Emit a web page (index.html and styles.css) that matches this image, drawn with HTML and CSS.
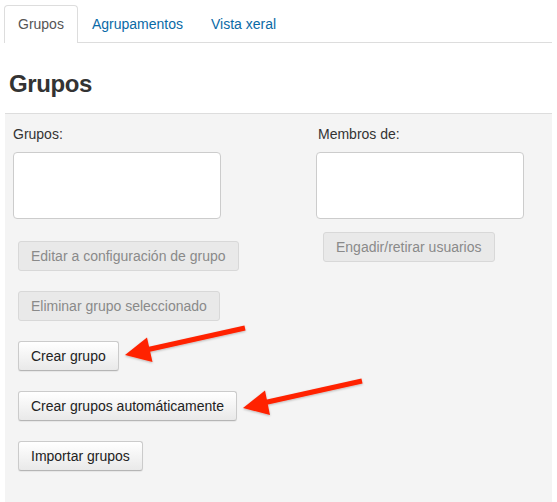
FILE: index.html
```html
<!DOCTYPE html>
<html lang="gl">
<head>
<meta charset="utf-8">
<title>Grupos</title>
<link rel="stylesheet" href="styles.css">
</head>
<body>
<div class="page">
  <ul class="tabs">
    <li class="tab active">Grupos</li>
    <li class="tab"><a href="#">Agrupamentos</a></li>
    <li class="tab"><a href="#">Vista xeral</a></li>
  </ul>
  <h2 class="title">Grupos</h2>
  <div class="panel">
    <div class="col col-left">
      <label class="label">Grupos:</label>
      <div class="listbox"></div>
      <div class="actions">
        <button class="btn" disabled>Editar a configuración de grupo</button>
        <button class="btn" disabled>Eliminar grupo seleccionado</button>
        <button class="btn">Crear grupo</button>
        <button class="btn">Crear grupos automáticamente</button>
        <button class="btn">Importar grupos</button>
      </div>
    </div>
    <div class="col col-right">
      <label class="label label-right">Membros de:</label>
      <div class="listbox"></div>
      <div class="actions actions-right">
        <button class="btn" disabled>Engadir/retirar usuarios</button>
      </div>
    </div>
  </div>
</div>
<svg class="arrows" width="557" height="502" viewBox="0 0 557 502" aria-hidden="true">
  <defs>
    <filter id="sh" x="-20%" y="-50%" width="140%" height="200%">
      <feDropShadow dx="0" dy="1" stdDeviation="1" flood-color="#000" flood-opacity="0.25"/>
    </filter>
  </defs>
  <g filter="url(#sh)" fill="#ff2200" stroke="#ff2200">
    <line x1="245" y1="328" x2="146" y2="350" stroke-width="5"/>
    <polygon points="125,355 147,337.5 152.5,362" stroke="none"/>
    <line x1="362" y1="381" x2="263" y2="403" stroke-width="5"/>
    <polygon points="243,408 265,390.5 270,415" stroke="none"/>
  </g>
</svg>
</body>
</html>
```

FILE: styles.css
```css
html, body {
  margin: 0;
  padding: 0;
  height: 502px;
  overflow: hidden;
  background: #fff;
}

body {
  font-family: "Liberation Sans", Arial, Helvetica, sans-serif;
  font-size: 14px;
  color: #333;
  position: relative;
}

.page {
  display: flex;
  flex-direction: column;
  height: 502px;
  padding-top: 5px;
  box-sizing: border-box;
}

.tabs {
  list-style: none;
  margin: 0 5px 0 4px;
  padding: 0;
  display: flex;
  border-bottom: 1px solid #ddd;
}

.tab {
  padding: 8px 13px;
  line-height: 20px;
  border: 1px solid transparent;
  border-bottom: none;
  border-radius: 4px 4px 0 0;
}

.tab a {
  color: #0a6aa6;
  text-decoration: none;
}

.tab.active {
  color: #555;
  background: #fff;
  border-color: #ddd;
  margin-bottom: -1px;
  padding-bottom: 9px;
}

.title {
  margin: 28px 0 16px 9px;
  font-size: 24px;
  line-height: 26px;
  font-weight: bold;
  letter-spacing: -0.4px;
  color: #333;
}

.panel {
  flex: 1;
  margin: 0 5px;
  background: #f4f4f4;
  border-top: 1px solid #ddd;
  padding: 10px 0 0 8px;
  display: grid;
  grid-template-columns: 303px 1fr;
  align-items: start;
}

.col {
  display: flex;
  flex-direction: column;
  align-items: flex-start;
}

.label {
  line-height: 20px;
  color: #333;
}

.label-right {
  padding-left: 2px;
}

.listbox {
  margin-top: 8px;
  width: 208px;
  height: 67px;
  box-sizing: border-box;
  background: #fff;
  border: 1px solid #ccc;
  border-radius: 4px;
}

.actions {
  display: flex;
  flex-direction: column;
  align-items: flex-start;
  gap: 20px;
  margin: 22px 0 0 5px;
}

.actions-right {
  margin: 13px 0 0 7px;
}

.btn {
  font-family: "Liberation Sans", Arial, Helvetica, sans-serif;
  font-size: 14px;
  height: 30px;
  line-height: 27px;
  padding: 1px 12px 0;
  box-sizing: border-box;
  color: #222;
  background: linear-gradient(#ffffff, #e9e9e9);
  border: 1px solid #cbcbcb;
  border-bottom-color: #b5b5b5;
  border-radius: 3px;
  box-shadow: 0 1px 1px rgba(0, 0, 0, 0.06);
  white-space: nowrap;
}

.btn:disabled {
  color: #8a8a8a;
  background: #e9e9e9;
  border-color: #d8d8d8;
  box-shadow: none;
}

.arrows {
  position: absolute;
  left: 0;
  top: 0;
  pointer-events: none;
}
```
